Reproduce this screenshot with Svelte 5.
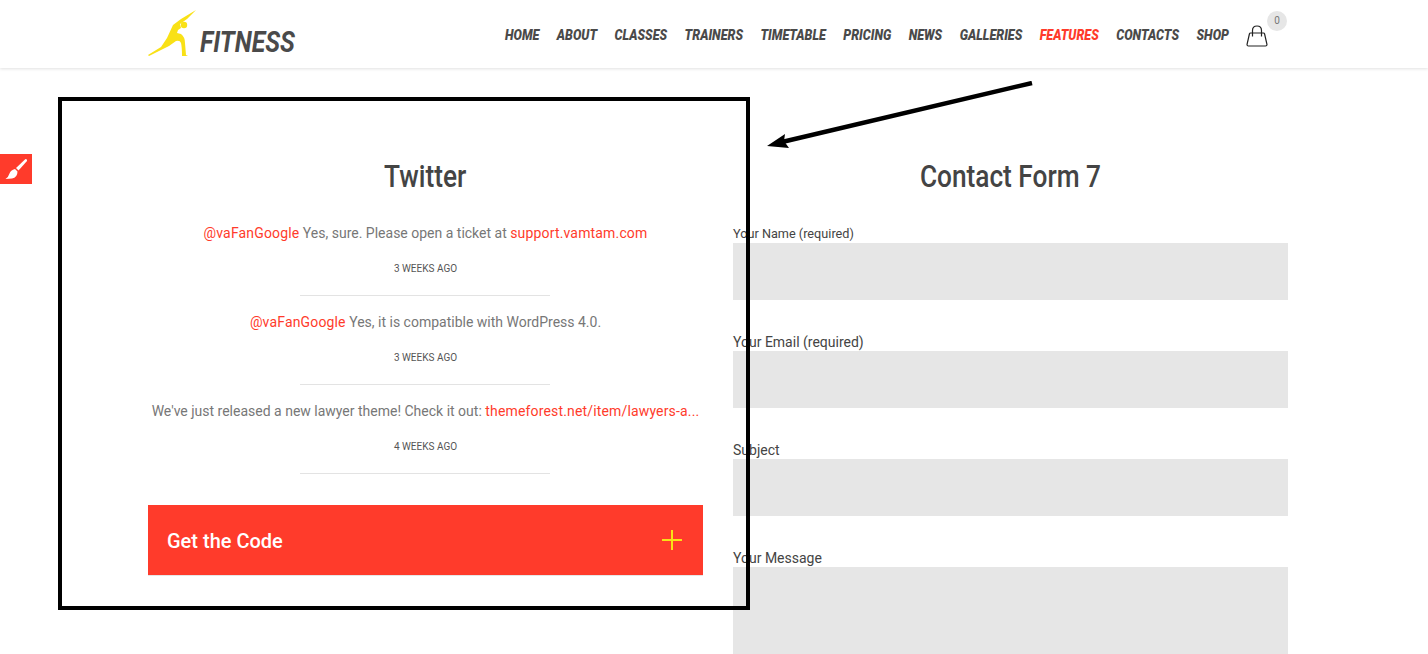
<script>
  const nav = ['Home', 'About', 'Classes', 'Trainers', 'Timetable', 'Pricing', 'News', 'Galleries', 'Features', 'Contacts', 'Shop'];
  const tweets = [
    { time: '3 weeks ago', parts: [['@vaFanGoogle', true], [' Yes, sure. Please open a ticket at ', false], ['support.vamtam.com', true]] },
    { time: '3 weeks ago', parts: [['@vaFanGoogle', true], [' Yes, it is compatible with WordPress 4.0.', false]] },
    { time: '4 weeks ago', parts: [["We've just released a new lawyer theme! Check it out: ", false], ['themeforest.net/item/lawyers-a...', true]] },
  ];
  const fields = [
    { label: 'Your Name (required)', tall: false, small: true },
    { label: 'Your Email (required)', tall: false, small: false },
    { label: 'Subject', tall: false, small: false },
    { label: 'Your Message', tall: true, small: false },
  ];
</script>

<div class="page">
  <header class="top">
    <a class="logo" href="#home">
      <svg width="50" height="47" viewBox="0 0 50 47">
        <path fill="#f9e116" d="M0 45 L13 37 L19 28 L25 15 L33 9 L48 0 L39 9 L32 14 L33 18 L30 20 L29 23 L33 24 Q37 27 37 33 L38 45 L40 46 L34 46 Q34 37 33 33 Q32 30 28 31 L21 36 L11 41 L1 46 Z"/>
        <circle cx="36" cy="15" r="3.2" fill="#f9e116"/>
      </svg>
      <span>FITNESS</span>
    </a>
    <div class="right">
      <nav>
        {#each nav as n}
          <a href="#{n}" class:on={n === 'Features'}>{n}</a>
        {/each}
      </nav>
      <div class="cart">
        <svg width="22" height="22" viewBox="0 0 22 22" fill="none" stroke="#222" stroke-width="1.2">
          <path d="M4.5 8 H17.5 Q18.3 8 18.6 9 L21 19.5 Q21 21 19.5 21 H2.5 Q1 21 1 19.5 L3.4 9 Q3.7 8 4.5 8 Z"/>
          <path d="M6.5 11.5 V5.5 Q6.5 1 11 1 Q15.5 1 15.5 5.5 V11.5"/>
        </svg>
        <span class="count">0</span>
      </div>
    </div>
  </header>

  <main class="cols">
    <section class="col">
      <h2><span>Twitter</span></h2>
      {#each tweets as t}
        <div class="tweet">
          <p>{#each t.parts as [txt, red]}<span class:red>{txt}</span>{/each}</p>
          <time>{t.time}</time>
        </div>
      {/each}
      <button type="button" class="code">
        <span>Get the Code</span>
        <svg width="20" height="20" viewBox="0 0 20 20" stroke="#f9e116" stroke-width="2"><path d="M0 10 H20 M10 0 V20"/></svg>
      </button>
    </section>
    <section class="col">
      <h2><span>Contact Form 7</span></h2>
      <form class="form">
        {#each fields as f}
          <label class:small={f.small}>
            <span>{f.label}</span>
            <div class="input" class:tall={f.tall}></div>
          </label>
        {/each}
      </form>
    </section>
  </main>

  <!-- overlays: the style switcher tab and the screenshot's annotation -->
  <div class="brush">
    <svg width="24" height="24" viewBox="0 0 24 24" fill="#fff">
      <path d="M21.5 2 Q23.5 2 23 4 L14.5 13.5 L12 11 Z"/>
      <path d="M11 12 L13.5 14.5 Q13.5 20.5 8 21.5 L1.5 22 Q4.5 20 5.5 16.5 Q6.5 13 11 12 Z"/>
    </svg>
  </div>
  <div class="frame"></div>
  <svg class="arrow" width="270" height="70" viewBox="0 0 270 70">
    <path d="M265 2 L15 61" stroke="#000" stroke-width="4.5"/>
    <path d="M0 65 L18 53 L17 60 L22 67 Z" fill="#000"/>
  </svg>
</div>

<style>
  :global(body) { margin: 0; background: #fff; overflow: hidden; }
  .page {
    position: relative;
    width: 1428px;
    height: 654px;
    overflow: hidden;
    font-family: Roboto, "Liberation Sans", sans-serif;
  }
  .top {
    display: flex;
    align-items: center;
    justify-content: space-between;
    height: 68px;
    padding: 0 160px 0 148px;
    box-shadow: 0 1px 3px rgba(0, 0, 0, 0.12);
  }
  .logo { display: flex; align-items: flex-end; gap: 2px; text-decoration: none; margin-top: -2px; }
  .logo span {
    font-size: 30px;
    line-height: 30px;
    font-weight: 700;
    font-style: italic;
    color: #4a4a4a;
    display: inline-block;
    transform: scaleX(0.826);
    transform-origin: left;
  }
  .right { display: flex; align-items: center; gap: 17px; }
  nav {
    display: flex;
    align-items: center;
    gap: 19.5px;
    transform: scaleX(0.895);
    transform-origin: right;
    margin-top: 1px;
  }
  nav a {
    font-size: 14px;
    font-weight: 900;
    font-style: italic;
    text-transform: uppercase;
    color: #4a4a4a;
    text-decoration: none;
  }
  nav a.on { color: #ff3b2b; }
  .cart { position: relative; height: 22px; margin-top: 4px; }
  .count {
    position: absolute;
    left: 21px;
    top: -14px;
    width: 20px;
    height: 20px;
    border-radius: 50%;
    background: #e6e6e6;
    color: #777;
    font-size: 10px;
    line-height: 20px;
    text-align: center;
  }
  .cols { display: flex; gap: 30px; padding: 0 0 0 148px; }
  .col { width: 555px; flex: none; }
  h2 {
    margin: 88px 0 22px;
    font-size: 32px;
    line-height: 40px;
    font-weight: 500;
    text-align: center;
    color: #444;
  }
  h2 span { display: inline-block; transform: scaleX(0.82); }
  .tweet { text-align: center; height: 89px; position: relative; }
  .tweet p { margin: 0; padding-top: 5px; font-size: 14px; line-height: 20px; color: #777; white-space: nowrap; }
  .red { color: #ff3b2b; letter-spacing: 0.16px; }
  time {
    display: block;
    margin-top: 19px;
    font-size: 10px;
    line-height: 14px;
    text-transform: uppercase;
    color: #555;
  }
  .tweet::after {
    content: '';
    position: absolute;
    left: 152px;
    bottom: 11px;
    width: 250px;
    height: 1px;
    background: #e3e3e3;
  }
  .code {
    display: flex;
    align-items: center;
    justify-content: space-between;
    width: 100%;
    height: 71px;
    margin-top: 20px;
    padding: 0 21px 0 19px;
    border: 0;
    border-bottom: 1px solid #e6e6e6;
    background: #ff3b2b;
    color: #fff;
    font-family: inherit;
    font-size: 20px;
    font-weight: 500;
  }
  .code span { margin-top: 2px; }
  .form { display: flex; flex-direction: column; gap: 32px; margin-top: 28px; }
  label { display: block; font-size: 14px; line-height: 20px; color: #444; }
  label.small { font-size: 12.7px; }
  label span { display: block; height: 17px; }
  .input { height: 57px; background: #e6e6e6; margin-top: 2px; }
  .input.tall { height: 160px; }
  .brush {
    position: absolute;
    left: 0;
    top: 154px;
    width: 32px;
    height: 30px;
    background: #ff3b2b;
    display: flex;
    align-items: center;
    justify-content: center;
  }
  .frame {
    position: absolute;
    left: 58px;
    top: 97px;
    width: 692px;
    height: 513px;
    box-sizing: border-box;
    border: 4px solid #000;
  }
  .arrow { position: absolute; left: 767px; top: 81px; }
</style>
